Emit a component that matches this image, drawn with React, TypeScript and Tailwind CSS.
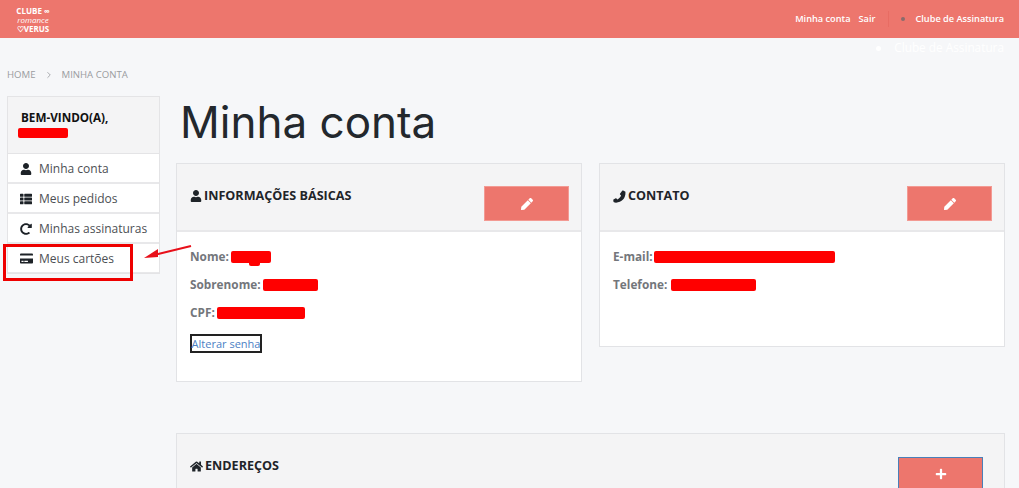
import { FaCreditCard, FaHome, FaPen, FaPlus, FaRedoAlt, FaThList, FaUser } from "react-icons/fa";
import { ChevronRight } from "lucide-react";
import type { ReactNode } from "react";

function Handset() {
  return (
    <svg viewBox="0 0 14 14" className="w-[13px] h-[13px]" fill="currentColor">
      <path d="M11 .6l2.4 1.2c.3 3.6-.9 6.6-2.6 8.5-1.9 2-4.7 3.3-7.5 3.3-.9 0-2-.2-2.7-.6L.3 11c-.2-.4 0-.7.3-.9l2.3-1.2c.3-.1.6 0 .8.2l1 1.1c1.600-.7 3.400-2.600 4-4.300L7.600 4.800c-.2-.2-.2-.5-.1-.8L9.900.9c.2-.3.700-.5 1.100-.3z" />
    </svg>
  );
}

function SideItem({ icon, label }: { icon: ReactNode; label: string }) {
  return (
    <div className="h-[30px] shrink-0 flex items-center bg-white border-b-2 border-[#e8e8ea] pl-[12px] pt-[1px] text-[12px] text-[#4c4f54]">
      <span className="w-[19px] flex justify-start text-[#1d2227]">{icon}</span>
      {label}
    </div>
  );
}

function Field({ label, width, gap, bump }: { label: string; width: number; gap: number; bump?: boolean }) {
  return (
    <div className="h-[28px] flex items-center font-bold text-[#73767b] text-[11.8px]">
      {label}
      <span className="relative block h-[12px] bg-[#ff0000] rounded-[2px]" style={{ width, marginLeft: gap }}>
        {bump && <span className="absolute left-[18px] top-[10px] w-[11px] h-[5px] bg-[#ff0000] rounded-[2px]" />}
      </span>
    </div>
  );
}

function CardHead({ icon, title, button }: { icon: ReactNode; title: string; button: ReactNode }) {
  return (
    <div className="h-[68px] shrink-0 bg-[#f4f4f5] border-b-[2px] border-[#e8e8ea] pl-[13px] pr-[12px] pt-[22px] flex justify-between">
      <div className="h-[20px] flex items-center gap-[2px] font-bold text-[12.6px] text-[#1f2429]">
        {icon}
        {title}
      </div>
      {button}
    </div>
  );
}

function EditButton() {
  return (
    <div className="w-[85px] h-[35px] bg-[#ed766d] border border-[#f39a93] flex items-center justify-center text-white">
      <FaPen size={12} />
    </div>
  );
}

export default function App() {
  return (
    <div className="relative h-[488px] overflow-hidden bg-[#f6f7f9] font-['Open_Sans',sans-serif]">
      <header className="h-[38px] bg-[#ed766d] flex items-center justify-between pl-[15px] pr-[15px] text-white">
        <div className="w-[36px] flex flex-col items-center font-bold text-[8px] leading-[9px]">
          <span>CLUBE ∞</span>
          <span className="font-normal italic">romance</span>
          <span>♡VERUS</span>
        </div>
        <nav className="flex items-center font-semibold text-[9.2px]">
          <span>Minha conta</span>
          <span className="ml-[8px]">Sair</span>
          <span className="ml-[13px] h-[16px] w-px bg-[#e86c63]" />
          <span className="ml-[12px] w-[4px] h-[4px] rounded-full bg-[#8a6b6b]" />
          <span className="ml-[10px]">Clube de Assinatura</span>
        </nav>
      </header>

      <div className="h-[20px] flex items-center justify-end pr-[15px] text-white text-[11.8px]">
        <span className="w-[5px] h-[5px] rounded-full bg-white mr-[13px]" />
        Clube de Assinatura
      </div>

      <div className="mt-[7px] h-[20px] flex items-center pl-[7px] text-[9.6px] text-[#9a9ca0]">
        HOME
        <ChevronRight size={10} className="mx-[8px]" />
        MINHA CONTA
      </div>

      <div className="mt-[11px] flex items-start pl-[7px]">
        <aside className="w-[153px] h-[178px] flex flex-col shrink-0 overflow-hidden border border-[#e4e4e6] bg-white">
          <div className="h-[57px] shrink-0 bg-[#f4f4f5] border-b border-[#e4e4e6] pl-[13px] pt-[10px] font-bold text-[11.7px] leading-[20px] text-[#111]">
            BEM-VINDO(A),
            <span className="block w-[50px] h-[10px] -ml-[3px] mt-[1px] bg-[#ff0000] rounded-[2px]" />
          </div>
          <SideItem icon={<FaUser size={12} />} label="Minha conta" />
          <SideItem icon={<FaThList size={12} />} label="Meus pedidos" />
          <SideItem icon={<FaRedoAlt size={12} />} label="Minhas assinaturas" />
          <SideItem icon={<FaCreditCard size={13} />} label="Meus cartões" />
        </aside>

        <main className="ml-[16px] w-[829px] shrink-0">
          <h1 className="h-[67px] pl-[4px] font-['Inter',sans-serif] text-[44px] leading-[52px] text-[#23282d]">
            Minha conta
          </h1>
          <div className="flex items-start justify-between">
            <section className="w-[406px] h-[219px] border border-[#e2e3e6] bg-white flex flex-col">
              <CardHead icon={<FaUser size={12} />} title="INFORMAÇÕES BÁSICAS" button={<EditButton />} />
              <div className="pl-[13px] pt-[11px]">
                <Field label="Nome:" width={40} gap={2} bump />
                <Field label="Sobrenome:" width={55} gap={2} />
                <Field label="CPF:" width={88} gap={2} />
                <a className="mt-[7px] flex justify-center w-[72px] h-[19px] border-2 border-[#222] whitespace-nowrap text-[11px] leading-[15px] text-[#4b80c4]">
                  Alterar senha
                </a>
              </div>
            </section>
            <section className="w-[406px] h-[184px] border border-[#e2e3e6] bg-white flex flex-col">
              <CardHead icon={<Handset />} title="CONTATO" button={<EditButton />} />
              <div className="pl-[13px] pt-[11px]">
                <Field label="E-mail:" width={181} gap={1} />
                <Field label="Telefone:" width={85} gap={4} />
              </div>
            </section>
          </div>
          <section className="mt-[51px] w-[829px] border border-[#e2e3e6] bg-[#f4f4f5] h-[80px] pl-[13px] pr-[21px] pt-[22px] flex justify-between">
            <div className="h-[20px] flex items-center gap-[2px] font-bold text-[12.6px] text-[#1f2429]">
              <FaHome size={13} />
              ENDEREÇOS
            </div>
            <div className="w-[85px] h-[40px] mt-[1px] pt-[10px] bg-[#ed766d] border border-[#4a7fb8] flex items-start justify-center text-white">
              <FaPlus size={12} />
            </div>
          </section>
        </main>
      </div>

      {/* annotation drawn over the page */}
      <div className="absolute left-[3px] top-[244px] w-[130px] h-[37px] border-[3px] border-[#ee0000]" />
      <svg className="absolute left-[140px] top-[240px]" width="56" height="24" viewBox="0 0 56 24">
        <path d="M51 6 L14 15" stroke="#e8101a" strokeWidth="2" />
        <path d="M4 18 L18 9 L18 17 Z" fill="#e8101a" />
      </svg>
    </div>
  );
}
